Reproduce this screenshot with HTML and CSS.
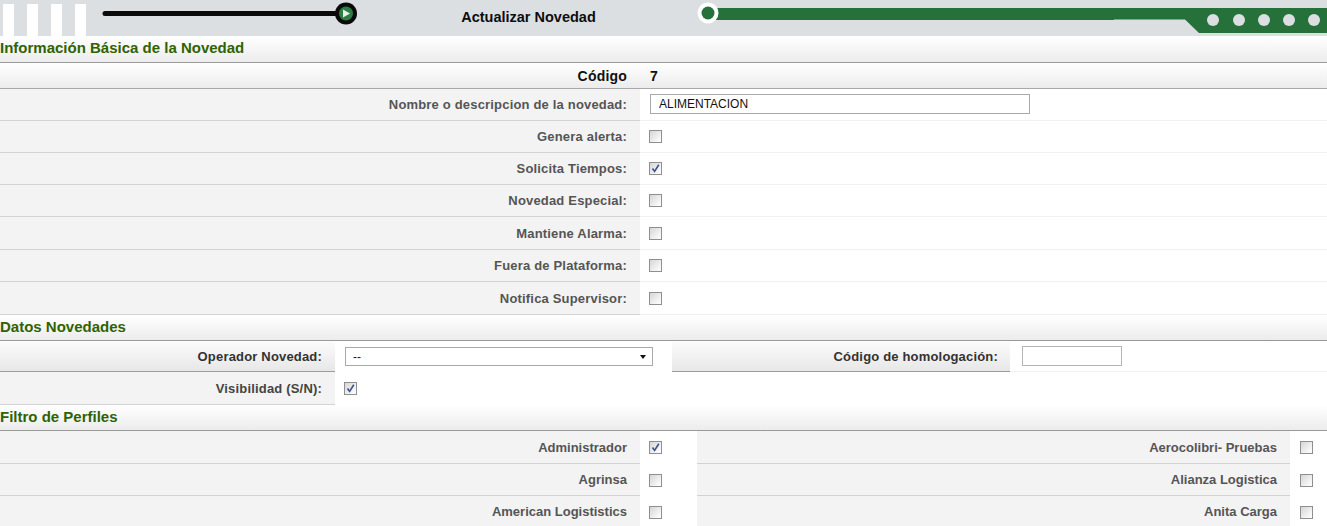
FILE: index.html
```html
<!DOCTYPE html>
<html lang="es">
<head>
<meta charset="utf-8">
<title>Actualizar Novedad</title>
<link rel="stylesheet" href="styles.css">
</head>
<body>
<header class="topbar">
  <svg class="deco-left" width="360" height="36" viewBox="0 0 360 36">
    <rect x="3" y="4" width="11" height="32" fill="#fff"/>
    <rect x="27" y="4" width="11" height="32" fill="#fff"/>
    <rect x="51" y="4" width="11" height="32" fill="#fff"/>
    <rect x="75" y="4" width="11" height="32" fill="#fff"/>
    <line x1="105" y1="13.5" x2="340" y2="13.5" stroke="#0a0a0a" stroke-width="5" stroke-linecap="round"/>
    <circle cx="346" cy="13.5" r="11" fill="#0a0a0a"/>
    <circle cx="346" cy="13.5" r="7" fill="#2f7d45"/>
    <path d="M343 9.5 L350 13.5 L343 17.5 Z" fill="#e8f2ea"/>
  </svg>
  <h1 class="title">Actualizar Novedad</h1>
  <svg class="deco-right" width="630" height="36" viewBox="0 0 630 36">
    <path d="M16 8 H630 V33 H502 L488 19.5 H417 V20 H16 Z" fill="#267039"/>
    <circle cx="11" cy="13" r="10.5" fill="#fff"/>
    <circle cx="11" cy="13" r="6.5" fill="#267039"/>
    <circle cx="516" cy="20" r="6" fill="#dcdfe2"/>
    <circle cx="542" cy="20" r="6" fill="#dcdfe2"/>
    <circle cx="567" cy="20" r="6" fill="#dcdfe2"/>
    <circle cx="592" cy="20" r="6" fill="#dcdfe2"/>
    <circle cx="617" cy="20" r="6" fill="#dcdfe2"/>
  </svg>
</header>

<section>
  <h2 class="sec-head sec-first">Información Básica de la Novedad</h2>
  <div class="grid g-basic">
    <div class="cell head-cell lbl lbl-dark">Código</div>
    <div class="cell head-cell val val-bold">7</div>

    <div class="cell lbl">Nombre o descripcion de la novedad:</div>
    <div class="cell val"><input class="txt txt-name" type="text" value="ALIMENTACION"></div>

    <div class="cell lbl">Genera alerta:</div>
    <div class="cell val"><span class="cb"></span></div>

    <div class="cell lbl">Solicita Tiempos:</div>
    <div class="cell val"><span class="cb"><svg viewBox="0 0 11 11" width="11" height="11"><path d="M2.5 5.5 L4.6 8.4 L8.8 1.8" fill="none" stroke="#3c4f8f" stroke-width="1.6"/></svg></span></div>

    <div class="cell lbl">Novedad Especial:</div>
    <div class="cell val"><span class="cb"></span></div>

    <div class="cell lbl">Mantiene Alarma:</div>
    <div class="cell val"><span class="cb"></span></div>

    <div class="cell lbl">Fuera de Plataforma:</div>
    <div class="cell val"><span class="cb"></span></div>

    <div class="cell lbl">Notifica Supervisor:</div>
    <div class="cell val"><span class="cb"></span></div>
  </div>
</section>

<section>
  <h2 class="sec-head">Datos Novedades</h2>
  <div class="grid g-datos">
    <div class="cell lbl lbl-grad">Operador Novedad:</div>
    <div class="cell val val-sel">
      <div class="select"><span>--</span><span class="arrow"></span></div>
    </div>
    <div class="cell lbl lbl-grad">Código de homologación:</div>
    <div class="cell val val-pad"><input class="txt txt-homo" type="text" value=""></div>

    <div class="cell lbl lbl-tall">Visibilidad (S/N):</div>
    <div class="cell val val-span"><span class="cb"><svg viewBox="0 0 11 11" width="11" height="11"><path d="M2.5 5.5 L4.6 8.4 L8.8 1.8" fill="none" stroke="#3c4f8f" stroke-width="1.6"/></svg></span></div>
  </div>
</section>

<section>
  <h2 class="sec-head">Filtro de Perfiles</h2>
  <div class="grid g-perfiles">
    <div class="cell lbl">Administrador</div>
    <div class="cell val"><span class="cb"><svg viewBox="0 0 11 11" width="11" height="11"><path d="M2.5 5.5 L4.6 8.4 L8.8 1.8" fill="none" stroke="#3c4f8f" stroke-width="1.6"/></svg></span></div>
    <div class="cell lbl">Aerocolibri- Pruebas</div>
    <div class="cell val"><span class="cb"></span></div>

    <div class="cell lbl">Agrinsa</div>
    <div class="cell val"><span class="cb"></span></div>
    <div class="cell lbl">Alianza Logistica</div>
    <div class="cell val"><span class="cb"></span></div>

    <div class="cell lbl">American Logististics</div>
    <div class="cell val"><span class="cb"></span></div>
    <div class="cell lbl">Anita Carga</div>
    <div class="cell val"><span class="cb"></span></div>
  </div>
</section>
</body>
</html>
```

FILE: styles.css
```css
* { box-sizing: border-box; }

html, body {
  margin: 0;
  padding: 0;
  background: #fff;
  font-family: "Liberation Sans", Arial, sans-serif;
  font-size: 13px;
  color: #555;
}

.topbar {
  display: flex;
  align-items: flex-start;
  height: 36px;
  background: #dcdfe2;
}

.deco-left, .deco-right { display: block; flex: none; }

.deco-right { margin-left: auto; }

.title {
  flex: 1;
  margin: 0;
  padding-top: 9px;
  text-align: center;
  font-size: 14.5px;
  font-weight: bold;
  color: #0d0d0d;
  line-height: 17px;
}

.sec-head {
  margin: 0;
  height: 26px;
  padding: 3px 0 0 0;
  font-size: 15px;
  line-height: 17px;
  font-weight: bold;
  color: #2f6300;
  background: linear-gradient(#ffffff, #ececec);
  border-bottom: 1px solid #9a9a9a;
}

.sec-first { height: 27px; }

.grid { display: grid; }

.g-basic {
  grid-template-columns: 640px 1fr;
  grid-template-rows: 26px 32px 32px 32px 32px 33px 32px 33px;
}

.g-datos {
  grid-template-columns: 335px 337px 338px 1fr;
  grid-template-rows: 31px 33px;
}

.g-perfiles {
  grid-template-columns: 640px 57px 1fr 37px;
  grid-template-rows: 33px 32px 32px;
}

.cell {
  display: flex;
  align-items: center;
  font-weight: bold;
}

.lbl {
  justify-content: flex-end;
  padding-right: 13px;
  background: #f3f3f3;
  border-bottom: 1px solid #d2d2d2;
  color: #555;
  white-space: nowrap;
}

.g-basic .lbl,
.g-datos .lbl { letter-spacing: 0.18px; }

.lbl-dark { color: #111; }

.g-basic .lbl-dark { font-size: 14px; letter-spacing: 0.2px; }

.head-cell {
  background: linear-gradient(#ffffff, #ececec);
  border-bottom: 1px solid #a8a8a8;
}

.val {
  padding-left: 10px;
  background: #fff;
  border-bottom: 1px solid #f1f1f1;
}

.val.head-cell {
  background: linear-gradient(#ffffff, #ececec);
  border-bottom: 1px solid #a8a8a8;
}

.val-bold { color: #111; padding-left: 11px; font-size: 14px; }

.g-basic .val { padding-left: 9px; }
.g-basic .val-bold { padding-left: 10px; }

.g-perfiles .val { padding-left: 9px; border-bottom: none; }
.g-perfiles .val:nth-child(4n) { padding-left: 10px; }

.lbl-grad {
  background: linear-gradient(#fcfcfc, #e7e7e7);
  border-bottom: 1px solid #9c9c9c;
  color: #333;
}

.g-datos .lbl-grad:nth-child(3) { padding-right: 12px; }

.lbl-tall { color: #444; }

.val-sel { padding-left: 10px; border-bottom: none; }
.g-datos .val-pad { padding-left: 12px; }
.g-datos .val-span { grid-column: 2 / 5; padding-left: 9px; border-bottom: none; }

.txt {
  height: 20px;
  border: 1px solid #a9a9a9;
  background: #fff;
  font-family: "Liberation Sans", Arial, sans-serif;
  font-size: 12px;
  color: #111;
  padding: 0 8px;
  outline: none;
  margin: 0;
}

.txt-name { width: 380px; margin-bottom: 1px; margin-left: 1px; }
.txt-homo { width: 100px; height: 20px; border-color: #b5b5b5; }

.select {
  width: 308px;
  height: 19px;
  border: 1px solid #a9a9a9;
  background: #fff;
  display: flex;
  align-items: center;
  justify-content: space-between;
  padding: 0 6px 0 7px;
  font-size: 12px;
  font-weight: normal;
  color: #222;
}

.arrow {
  width: 0;
  height: 0;
  border-left: 3.5px solid transparent;
  border-right: 3.5px solid transparent;
  border-top: 4px solid #111;
}

.cb {
  width: 13px;
  height: 13px;
  border: 1px solid #8f8f8f;
  background: linear-gradient(135deg, #d6d6d6, #fafafa 85%);
  display: inline-flex;
  align-items: center;
  justify-content: center;
  flex: none;
}

.cb svg { display: block; }
```
